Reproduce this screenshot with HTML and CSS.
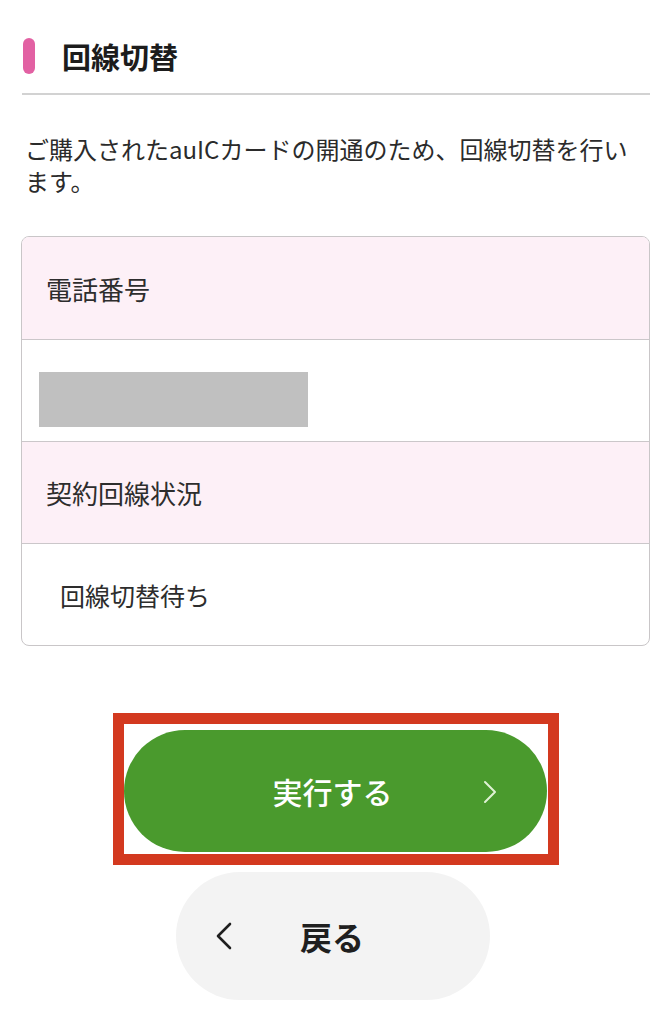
FILE: index.html
```html
<!DOCTYPE html>
<html lang="ja">
<head>
<meta charset="utf-8">
<title>回線切替</title>
<link rel="stylesheet" href="styles.css">
</head>
<body>
<main class="page">
  <header class="heading">
    <span class="heading-bar"></span>
    <h1 class="heading-title">回線切替</h1>
  </header>
  <hr class="divider">
  <p class="lead">ご購入されたauICカードの開通のため、回線切替を行います。</p>

  <section class="info-card">
    <div class="row row-label">電話番号</div>
    <div class="row row-masked"><span class="mask"></span></div>
    <div class="row row-label">契約回線状況</div>
    <div class="row row-value">回線切替待ち</div>
  </section>

  <div class="actions">
    <div class="highlight">
      <button class="btn-primary" type="button">
        <span class="btn-primary-text">実行する</span>
        <svg class="chev-right" width="16" height="24" viewBox="0 0 16 24"><path d="M3 2 L13 12 L3 22" fill="none" stroke="currentColor" stroke-width="2" stroke-linecap="round" stroke-linejoin="round"/></svg>
      </button>
    </div>
    <button class="btn-back" type="button">
      <svg class="chev-left" width="20" height="30" viewBox="0 0 20 30"><path d="M16 3 L4 15 L16 27" fill="none" stroke="currentColor" stroke-width="2.6" stroke-linecap="round" stroke-linejoin="round"/></svg>
      <span class="btn-back-text">戻る</span>
    </button>
  </div>
</main>
</body>
</html>
```

FILE: styles.css
```css
* { box-sizing: border-box; }
html, body { margin: 0; padding: 0; background: #fff; }
body {
  font-family: "Noto Sans CJK JP", "Noto Sans", sans-serif;
  color: #222;
}
.page {
  padding: 38px 21px 0 22px;
}
.heading {
  display: flex;
  align-items: center;
  height: 36px;
}
.heading-bar {
  width: 12px;
  height: 36px;
  margin-left: 1px;
  border-radius: 6px;
  background: #e261a3;
}
.heading-title {
  margin: 0 0 0 27px;
  font-size: 29px;
  font-weight: 700;
  line-height: 36px;
  color: #1c1c1c;
}
.divider {
  margin: 19px 0 0;
  border: 0;
  height: 2px;
  background: #d2d2d2;
}
.lead {
  margin: 38px 0 0;
  padding: 0 14px 0 3px;
  font-size: 24px;
  line-height: 32px;
  color: #2b2b2b;
}
.info-card {
  margin-top: 39px;
  margin-left: -1px;
  border: 1px solid #c9c6c8;
  border-radius: 8px;
  overflow: hidden;
}
.row {
  height: 102px;
  border-top: 1px solid #cbc7ca;
  font-size: 26px;
  color: #2d2d2d;
  display: flex;
  align-items: center;
}
.row:first-child { border-top: 0; }
.row-label {
  background: #fdf0f7;
  padding-left: 24px;
}
.row-masked {
  align-items: flex-start;
  padding: 32px 0 0 17px;
}
.mask {
  display: block;
  width: 269px;
  height: 55px;
  background: #c0c0c0;
}
.row-value {
  padding-left: 38px;
  font-size: 25px;
}
.actions {
  margin-top: 67px;
  display: flex;
  flex-direction: column;
  align-items: center;
}
.highlight {
  width: 446px;
  height: 152px;
  border: 11px solid #d3391f;
  padding: 6px 1px 1px 0;
}
.btn-primary {
  width: 100%;
  height: 122px;
  border: 0;
  border-radius: 61px;
  background: #4a9a2d;
  color: #fff;
  font-family: inherit;
  font-size: 30px;
  font-weight: 500;
  position: relative;
  display: flex;
  align-items: center;
  justify-content: center;
  padding: 0 6px 0 0;
}
.chev-right {
  position: absolute;
  right: 49px;
  top: 50%;
  margin-top: -11px;
  color: #dff2d4;
}
.btn-back {
  margin-top: 7px;
  margin-left: -6px;
  width: 314px;
  height: 128px;
  border: 0;
  border-radius: 64px;
  background: #f3f3f3;
  color: #1f1f1f;
  font-family: inherit;
  display: flex;
  align-items: center;
  padding: 0 0 0 38px;
}
.chev-left { flex: none; }
.btn-back-text {
  margin-left: 66px;
  font-size: 32px;
  font-weight: 700;
}
```
